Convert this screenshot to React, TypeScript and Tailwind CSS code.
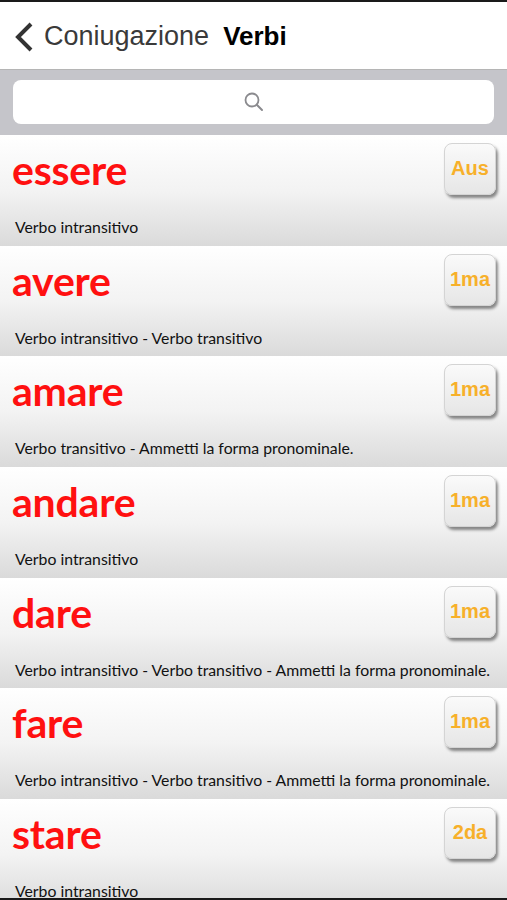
const verbs = [
  { name: "essere", badge: "Aus", desc: "Verbo intransitivo" },
  { name: "avere", badge: "1ma", desc: "Verbo intransitivo - Verbo transitivo" },
  { name: "amare", badge: "1ma", desc: "Verbo transitivo - Ammetti la forma pronominale." },
  { name: "andare", badge: "1ma", desc: "Verbo intransitivo" },
  { name: "dare", badge: "1ma", desc: "Verbo intransitivo - Verbo transitivo - Ammetti la forma pronominale." },
  { name: "fare", badge: "1ma", desc: "Verbo intransitivo - Verbo transitivo - Ammetti la forma pronominale." },
  { name: "stare", badge: "2da", desc: "Verbo intransitivo" },
];

const VerbRow = ({ name, badge, desc }: { name: string; badge: string; desc: string }) => {
  return (
    <div className="relative h-[110.7px] shrink-0 bg-gradient-to-b from-white via-[#f3f3f3] to-[#dadada] font-['Lato',sans-serif]">
      <div className="pl-[12px] pt-[11px] text-[41px] leading-[48px] font-bold text-[#ff1010] tracking-[-0.2px]">
        {name}
      </div>
      <div className="pl-[15px] pt-[24px] text-[15.8px] leading-[18px] text-[#111] whitespace-nowrap">
        {desc}
      </div>
      <div className="absolute right-[11px] top-[8px] w-[52px] h-[52px] rounded-[8px] bg-gradient-to-b from-[#fafafa] to-[#e6e6e6] border border-[#d4d4d4] shadow-[2px_3px_3px_rgba(0,0,0,0.45)] flex items-start justify-center pt-[12px]">
        <span className="font-['Liberation_Sans',sans-serif] font-bold text-[20px] leading-[24px] text-[#f7b02a]">
          {badge}
        </span>
      </div>
    </div>
  );
};

const App = () => {
  return (
    <div className="w-[507px] h-[900px] overflow-hidden flex flex-col bg-white border-t-2 border-b-2 border-[#1a1a1a]">
      <div className="h-[68px] shrink-0 flex items-center px-[14px] pt-[2px] border-b border-[#b5b5b5] font-['Liberation_Sans',sans-serif]">
        <svg width="20" height="30" viewBox="0 0 20 30" className="mr-[10px]">
          <path d="M17 2 L4 15 L17 28" fill="none" stroke="#333" strokeWidth="4" />
        </svg>
        <span className="text-[27px] text-[#3a3a3a]">Coniugazione</span>
        <span className="ml-[14px] text-[26px] font-bold text-black">Verbi</span>
      </div>
      <div className="h-[65px] shrink-0 bg-[#c5c5ca] px-[13px] pt-[10px]">
        <div className="h-[44px] bg-white rounded-[8px] flex items-center justify-center">
          <svg width="22" height="22" viewBox="0 0 22 22">
            <circle cx="9" cy="9" r="6.5" fill="none" stroke="#8a8a8e" strokeWidth="1.8" />
            <path d="M13.8 13.8 L19 19" stroke="#8a8a8e" strokeWidth="2" strokeLinecap="round" />
          </svg>
        </div>
      </div>
      {verbs.map((v) => (
        <VerbRow key={v.name} {...v} />
      ))}
    </div>
  );
};

export default App;
